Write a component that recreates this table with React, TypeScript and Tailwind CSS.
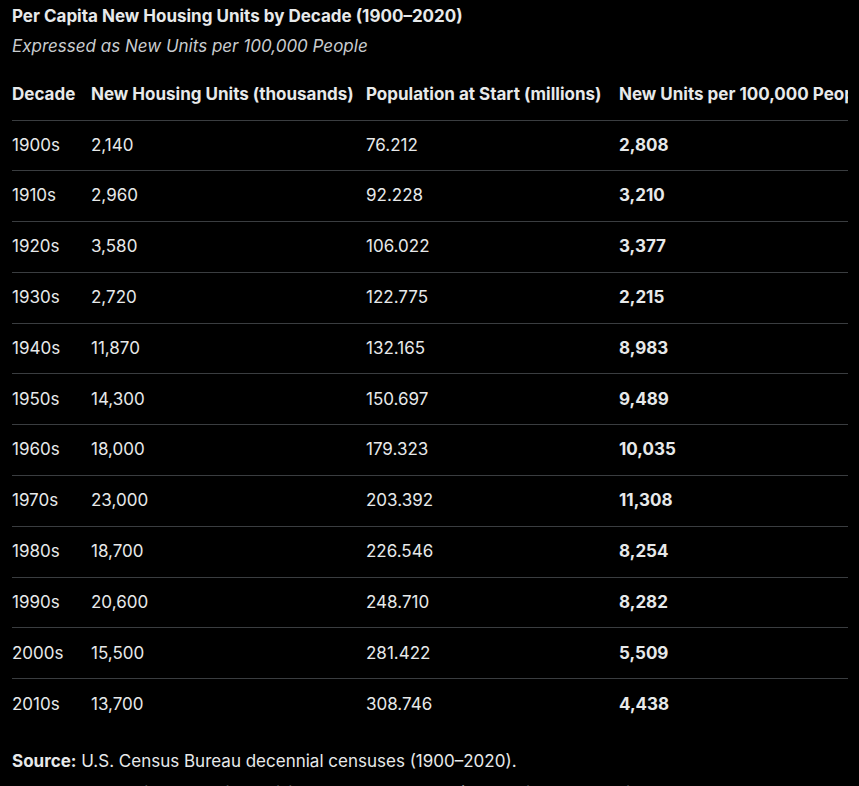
const rows = [
  ['1900s', '2,140', '76.212', '2,808'],
  ['1910s', '2,960', '92.228', '3,210'],
  ['1920s', '3,580', '106.022', '3,377'],
  ['1930s', '2,720', '122.775', '2,215'],
  ['1940s', '11,870', '132.165', '8,983'],
  ['1950s', '14,300', '150.697', '9,489'],
  ['1960s', '18,000', '179.323', '10,035'],
  ['1970s', '23,000', '203.392', '11,308'],
  ['1980s', '18,700', '226.546', '8,254'],
  ['1990s', '20,600', '248.710', '8,282'],
  ['2000s', '15,500', '281.422', '5,509'],
  ['2010s', '13,700', '308.746', '4,438'],
];

export default function App() {
  return (
    <div
      className="bg-black text-[#e7e9ea] pl-3 pr-[11px] pt-[6px] overflow-hidden h-[786px] text-[17px]"
      style={{ fontFamily: 'Inter, "Noto Sans", sans-serif' }}
    >
      <h2 className="font-bold leading-5">
        Per Capita New Housing Units by Decade (1900–2020)
      </h2>
      <p className="mt-[10px] italic leading-5 text-[#c9cccf]">
        Expressed as New Units per 100,000 People
      </p>

      <div className="mt-[13px] overflow-hidden">
        <table className="w-max min-w-full border-collapse">
          <thead>
            <tr className="border-b border-[#3a3d40] h-[51px] text-left">
              <th className="w-[79px] font-bold">Decade</th>
              <th className="w-[275px] font-bold">New Housing Units (thousands)</th>
              <th className="w-[253px] font-bold">Population at Start (millions)</th>
              <th className="font-bold pr-4">New Units per 100,000 People</th>
            </tr>
          </thead>
          <tbody>
            {rows.map((r, i) => (
              <tr
                key={r[0]}
                className={i < rows.length - 1 ? 'border-b border-[#3a3d40] h-[50.8px]' : 'h-[50.8px]'}
              >
                <td>{r[0]}</td>
                <td>{r[1]}</td>
                <td>{r[2]}</td>
                <td className="font-bold">{r[3]}</td>
              </tr>
            ))}
          </tbody>
        </table>
      </div>

      <p className="mt-[21px] leading-5">
        <span className="font-bold">Source:</span> U.S. Census Bureau decennial censuses (1900–2020).
      </p>
      <p className="mt-[12px] leading-5 text-[#8b8f93] whitespace-nowrap">
        Method: New units = Housing (millions) × 1,000; Rate = (New units ÷ Population at start) × 100,000.
      </p>
    </div>
  );
}
